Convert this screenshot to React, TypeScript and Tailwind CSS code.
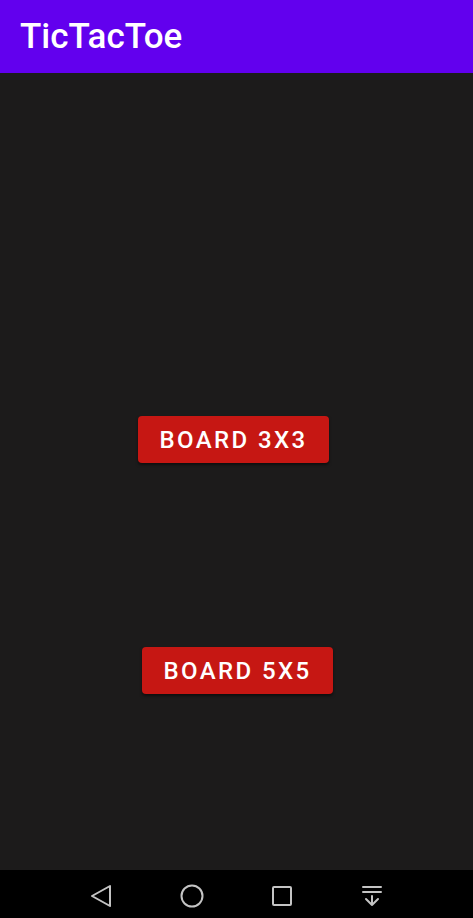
export default function App() {
  return (
    <div className="flex flex-col w-[473px] h-[918px] bg-[#1c1b1b] font-['Roboto',sans-serif]">
      <div className="h-[73px] bg-[#6200ee] flex items-center px-5 shrink-0">
        <h1 className="text-white text-[35px] font-medium leading-none mb-[1px]">TicTacToe</h1>
      </div>

      <div className="flex-1 flex flex-col">
        <button className="mt-[343px] ml-[138px] w-[191px] h-[47px] rounded bg-[#c61713] text-white text-[24px] font-medium tracking-[2.4px] shadow-[0_2px_3px_rgba(0,0,0,0.5)]">
          BOARD 3X3
        </button>
        <button className="mt-[184px] ml-[142px] w-[191px] h-[47px] rounded bg-[#c61713] text-white text-[24px] font-medium tracking-[2.4px] shadow-[0_2px_3px_rgba(0,0,0,0.5)]">
          BOARD 5X5
        </button>
      </div>

      <div className="h-[48px] bg-black shrink-0">
        <svg width="473" height="48" viewBox="0 0 473 48" fill="none" stroke="#c4c4c4" strokeWidth="2" strokeLinejoin="round">
          <path d="M110 16 L92 26 L110 36 Z" />
          <circle cx="192" cy="26" r="10.5" />
          <rect x="273" y="17" width="18" height="18" rx="1" />
          <path d="M363 17 H381 M363 22 H381 M372 26 V35 M366 29 L372 35 L378 29" strokeLinecap="round" />
        </svg>
      </div>
    </div>
  );
}
